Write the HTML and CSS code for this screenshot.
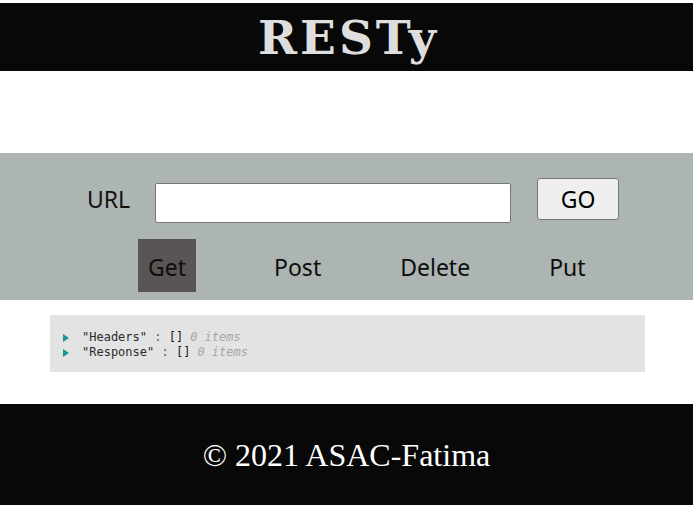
FILE: index.html
```html
<!DOCTYPE html>
<html lang="en">
<head>
<meta charset="utf-8">
<title>RESTy</title>
<link rel="stylesheet" href="styles.css">
</head>
<body>
<div class="page">
  <header class="site-header">
    <h1 class="logo">RESTy</h1>
  </header>
  <div class="spacer"></div>
  <section class="controls">
    <form class="url-row">
      <label class="url-label" for="url">URL</label>
      <input class="url-input" id="url" type="text">
      <button class="go-btn" type="button">GO</button>
    </form>
    <ul class="methods">
      <li class="method active">Get</li>
      <li class="method">Post</li>
      <li class="method">Delete</li>
      <li class="method">Put</li>
    </ul>
  </section>
  <section class="results">
    <div class="json-box">
      <div class="json-line"><span class="caret"></span><span class="key">"Headers"</span><span class="colon"> : </span><span class="brk">[]</span> <span class="count">0 items</span></div>
      <div class="json-line"><span class="caret"></span><span class="key">"Response"</span><span class="colon"> : </span><span class="brk">[]</span> <span class="count">0 items</span></div>
    </div>
  </section>
  <footer class="site-footer">
    <p class="copy">© 2021 ASAC-Fatima</p>
  </footer>
</div>
</body>
</html>
```
FILE: styles.css
```css
* { box-sizing: border-box; }
html, body { margin: 0; padding: 0; background: #fff; }
.page { padding-top: 3px; }

.site-header {
  background: #080808;
  height: 68px;
  display: flex;
  align-items: center;
  justify-content: center;
}
.logo {
  margin: 0;
  font-family: "DejaVu Serif", serif;
  font-weight: bold;
  font-size: 47px;
  letter-spacing: 3px;
  line-height: 1;
  color: #dedede;
  padding: 0 0 0 4px;
}

.spacer { height: 82px; }

.controls {
  background: #adb5b3;
  height: 147px;
  padding-top: 25px;
  font-family: "Noto Sans", "Open Sans", sans-serif;
}
.url-row {
  display: flex;
  align-items: flex-start;
  margin: 0;
  padding-left: 87px;
  height: 45px;
}
.url-label {
  font-size: 23px;
  color: #111;
  width: 42px;
  margin-right: 26px;
  margin-top: 4px;
  line-height: 34px;
}
.url-input {
  margin-top: 5px;
  width: 356px;
  height: 40px;
  border: 1px solid #767676;
  border-radius: 2px;
  background: #fff;
  padding: 0 4px;
  font-size: 16px;
}
.go-btn {
  margin-left: 26px;
  width: 82px;
  height: 42px;
  background: #efefef;
  border: 1px solid #767676;
  border-radius: 3px;
  font-family: "Noto Sans", "Open Sans", sans-serif;
  font-size: 23px;
  color: #000;
  padding: 0;
}

.methods {
  list-style: none;
  margin: 16px 0 0 0;
  padding: 0 0 0 138px;
  display: flex;
}
.method {
  height: 53px;
  line-height: 53px;
  padding: 2px 10px 0;
  font-size: 23px;
  color: #0d0d0d;
}
.method + .method { margin-left: 59px; }
.method.active + .method { margin-left: 68px; }
.method.active { background: #5a5554; }

.results { padding: 15px 48px 32px 50px; }
.json-box {
  background: #e3e3e3;
  height: 57px;
  padding: 15px 0 0 13px;
  font-family: "DejaVu Sans Mono", "Liberation Mono", monospace;
  font-size: 12px;
  line-height: 15px;
  color: #2b2b2b;
}
.json-line { display: flex; align-items: center; white-space: pre; }
.caret {
  width: 0; height: 0;
  border-top: 4px solid transparent;
  border-bottom: 4px solid transparent;
  border-left: 6px solid #1a9494;
  margin-right: 13px;
}
.key { color: #2b2b2b; }
.colon { color: #555; }
.brk { color: #1a1a1a; }
.count { color: #a6a6a6; font-style: italic; margin-left: 7px; }

.site-footer {
  background: #080808;
  height: 101px;
  display: flex;
  align-items: center;
  justify-content: center;
}
.copy {
  margin: 0;
  font-family: "Liberation Serif", "Times New Roman", serif;
  font-size: 32px;
  color: #fff;
  padding-top: 2px;
}
```
